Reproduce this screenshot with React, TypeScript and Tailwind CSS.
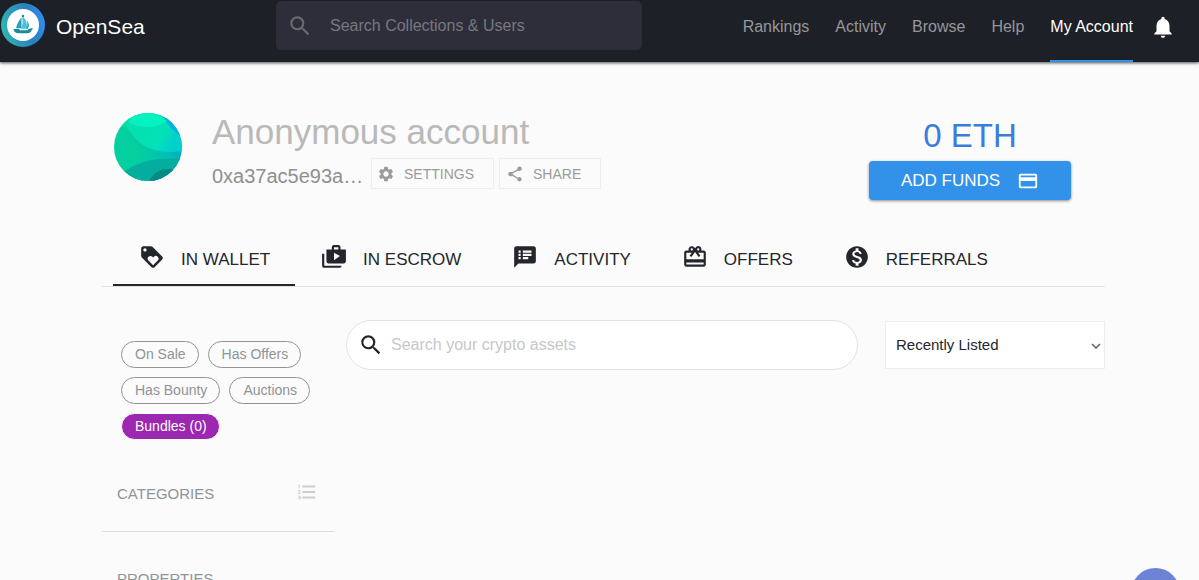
import { useState } from "react";
import {
  MdCardGiftcard,
  MdCreditCard,
  MdFormatListNumbered,
  MdLoyalty,
  MdMonetizationOn,
  MdNotifications,
  MdSearch,
  MdSettings,
  MdShare,
  MdShopTwo,
  MdSpeakerNotes,
} from "react-icons/md";

const navLinks = ["Rankings", "Activity", "Browse", "Help", "My Account"];

const tabs = [
  { label: "IN WALLET", icon: MdLoyalty },
  { label: "IN ESCROW", icon: MdShopTwo },
  { label: "ACTIVITY", icon: MdSpeakerNotes },
  { label: "OFFERS", icon: MdCardGiftcard },
  { label: "REFERRALS", icon: MdMonetizationOn },
];

const filters = ["On Sale", "Has Offers", "Has Bounty", "Auctions"];

function Logo() {
  return (
    <svg viewBox="0 0 44 44" className="h-11 w-11 shrink-0" aria-hidden="true">
      <defs>
        <linearGradient id="ring" x1="0" y1="0.6" x2="1" y2="0.4">
          <stop offset="0" stopColor="#2fb5b0" />
          <stop offset="0.65" stopColor="#2b7fc0" />
          <stop offset="1" stopColor="#338df0" />
        </linearGradient>
      </defs>
      <circle cx="22" cy="22" r="22" fill="url(#ring)" />
      <circle cx="22" cy="22" r="16" fill="#fff" />
      {/* sails */}
      <path d="M20.500 14.500c-2.500 2.500-4.500 6.500-5.500 10.700h5.500z" fill="#2a9fb8" />
      <path d="M21 13.500c3.500 1.500 5.500 6 5 12.200h-6.500c2.500-3.500 2.500-8 1.500-12.200z" fill="#4cc3da" />
      <path d="M26 17.500c2 2 2.500 5 1 8.200h-1.500c.9-3 1.200-5.500.5-8.200z" fill="#2a9fb8" />
      <circle cx="22" cy="13" r="1.200" fill="#1c7f98" />
      {/* hull */}
      <path d="M12.500 26h5.500l1 1.300h7.500l1-1.300 4-1c.5 0 .5 1-.5 1.500-.8 2.500-2.300 3.800-4.500 3.800H17.500c-3 0-4.500-1.500-5-4.300z" fill="#1d8a9c" />
    </svg>
  );
}

function Avatar() {
  return (
    <svg viewBox="0 0 68 68" className="mt-px h-[68px] w-[68px] shrink-0" role="img" aria-label="Account avatar">
      <defs>
        <clipPath id="face">
          <circle cx="34" cy="34" r="34" />
        </clipPath>
        <linearGradient id="sea" x1="0.35" y1="0.6" x2="1" y2="0.3">
          <stop offset="0" stopColor="#04cf9f" />
          <stop offset="0.6" stopColor="#04bdb4" />
          <stop offset="1" stopColor="#0399d4" />
        </linearGradient>
        <linearGradient id="band" x1="0" y1="0" x2="1" y2="0.35">
          <stop offset="0" stopColor="#05dfa6" />
          <stop offset="0.8" stopColor="#03e1b8" />
          <stop offset="1" stopColor="#02d0cc" />
        </linearGradient>
      </defs>
      <g clipPath="url(#face)">
        <rect width="68" height="68" fill="url(#sea)" />
        <path d="M5 12C15 14 16 20 23 27c10 10 26 14 45 11V0H10z" fill="url(#band)" />
        <path d="M48 4c4 6 12 15 20 20V0z" fill="#04b4dc" />
        <path d="M14 9c11 7 30 7 39-1L40-2H22z" fill="#04f2c0" />
        <path d="M10 59c14-11 34-15 58-13v22H14z" fill="#04ae9e" />
        <path d="M35 68c4-8 12-13 24-12v12z" fill="#048c84" />
      </g>
    </svg>
  );
}

export default function App() {
  const [activeTab, setActiveTab] = useState("IN WALLET");
  const [sort, setSort] = useState("Recently Listed");

  return (
    <div className="h-screen overflow-hidden bg-[#fbfbfb] font-['Liberation_Sans',Arial,sans-serif]">
      {/* Header */}
      <header className="flex h-[62px] items-start bg-[#1d2027] pr-[23px] pl-px shadow-[0_1px_3px_rgba(0,0,0,0.7)]">
        <a href="#home" className="mt-[3px] flex w-[275px] shrink-0 items-center gap-[11px] text-[21px] text-white">
          <Logo />
          <span className="pt-1">OpenSea</span>
        </a>
        <label className="mt-px flex h-[49px] w-[366px] items-center gap-[17px] rounded-[5px] bg-[#2d2e3a] pl-[11px]">
          <MdSearch className="h-[26px] w-[26px] shrink-0 text-[#686971]" />
          <input
            type="text"
            aria-label="Search collections and users"
            placeholder="Search Collections & Users"
            className="w-full bg-transparent text-base text-white outline-none placeholder:text-[#777880]"
          />
        </label>
        <nav className="ml-auto flex gap-[26px]">
          {navLinks.map((link) => (
            <a
              key={link}
              href="#nav"
              className={
                link === "My Account"
                  ? "flex h-[62px] items-center border-b-2 border-[#3291e9] pb-[6px] text-white"
                  : "flex h-[62px] items-center border-b-2 border-transparent pb-[6px] text-[#96979a] hover:text-white"
              }
            >
              {link}
            </a>
          ))}
        </nav>
        <button aria-label="Notifications" className="mt-[14px] ml-[17px] text-white">
          <MdNotifications className="h-[26px] w-[26px]" />
        </button>
      </header>

      <main className="pr-[94px] pl-[102px]">
        {/* Profile */}
        <section className="flex items-start justify-between pt-[50px] pr-[34px] pl-3">
          <div className="flex gap-[30px]">
            <Avatar />
            <div>
              <h1 className="text-[35px] leading-10 text-[#b9b9b9]">Anonymous account</h1>
              <div className="mt-[6px] flex items-center text-sm text-[#9b9b9b]">
                <span className="mt-[5px] w-[159px] text-xl leading-6 text-[#8f8f8f]">0xa37ac5e93a…</span>
                <button className="flex h-[31px] items-center gap-[9px] border border-[#eeeeee] pr-[19px] pl-[5px]">
                  <MdSettings className="h-[18px] w-[18px]" />
                  SETTINGS
                </button>
                <button className="ml-[5px] flex h-[31px] items-center gap-[9px] border border-[#eeeeee] pr-[19px] pl-[6px]">
                  <MdShare className="h-[18px] w-[18px]" />
                  SHARE
                </button>
              </div>
            </div>
          </div>
          <div className="w-[202px] pt-1 text-center">
            <p className="text-[33px] leading-10 text-[#3a7ddc]">0 ETH</p>
            <button className="mt-[5px] flex h-[39px] w-full items-center justify-center gap-[17px] rounded bg-[#3291e9] text-[17px] text-white shadow-[0_1px_3px_rgba(0,0,0,0.45)]">
              ADD FUNDS
              <MdCreditCard className="h-[22px] w-[22px]" />
            </button>
          </div>
        </section>

        {/* Tabs */}
        <div role="tablist" className="mt-7 flex border-b border-[#e2e2e2] pl-[11px]">
          {tabs.map(({ label, icon: Icon }) => (
            <button
              key={label}
              role="tab"
              aria-selected={activeTab === label}
              onClick={() => setActiveTab(label)}
              className={
                activeTab === label
                  ? "flex h-[58px] items-center gap-4 border-b-2 border-[#23262d] pr-[25px] pl-[26px] text-[17px] text-[#23262d]"
                  : "flex h-[58px] items-center gap-4 border-b-2 border-transparent pr-[25px] pl-[26px] text-[17px] text-[#23262d]"
              }
            >
              <Icon className="mt-[2px] h-[26px] w-[26px]" />
              <span className="pt-[7px]">{label}</span>
            </button>
          ))}
        </div>

        <div className="flex items-start">
          {/* Filters */}
          <aside className="w-[232px] shrink-0 text-[#8f9496]">
            <div className="flex flex-wrap gap-[9px] pt-[54px] pl-[19px] text-sm">
              {filters.map((filter) => (
                <button key={filter} className="h-[27px] rounded-full border border-[#8f9496] pr-3 pb-[2px] pl-[13px]">
                  {filter}
                </button>
              ))}
              <button className="h-[27px] rounded-full border border-[#fbfbfb] bg-[#9c27b0] pr-3 pb-[2px] pl-[13px] text-white">
                Bundles (0)
              </button>
            </div>
            <div className="mt-[41px] flex h-[51px] items-start justify-between border-b border-[#dddddd] pr-4 pl-[15px]">
              <h2 className="mt-[3px] text-[15px] leading-5">CATEGORIES</h2>
              <MdFormatListNumbered className="h-[22px] w-[22px] text-[#cdcdcd]" />
            </div>
            <h2 className="mt-[37px] pl-[15px] text-[15px] leading-5">PROPERTIES</h2>
          </aside>

          {/* Search and sort */}
          <div className="ml-3 flex flex-1 items-center pt-[33px]">
            <label className="flex h-[50px] flex-1 items-center gap-[7px] rounded-full border border-[#e2e2e2] bg-white pl-[11px]">
              <MdSearch className="h-[26px] w-[26px] shrink-0 text-[#23262d]" />
              <input
                type="text"
                aria-label="Search your crypto assets"
                placeholder="Search your crypto assets"
                className="mr-6 w-full bg-transparent text-base outline-none placeholder:text-[#c5c8c9]"
              />
            </label>
            <div className="relative ml-[27px]">
              <select
                aria-label="Sort assets"
                value={sort}
                onChange={(e) => setSort(e.target.value)}
                className="h-12 w-[220px] appearance-none border border-[#eeeeee] bg-white pl-[10px] text-[15px] text-[#23262d]"
              >
                <option>Recently Listed</option>
                <option>Recently Created</option>
                <option>Lowest Price</option>
                <option>Highest Price</option>
              </select>
              <svg
                viewBox="0 0 10 6"
                className="pointer-events-none absolute top-[22px] right-1 h-[6px] w-[10px]"
                aria-hidden="true"
              >
                <path d="M1 1l4 4 4-4" fill="none" stroke="#6b6b6b" strokeWidth="1.600" />
              </svg>
            </div>
          </div>
        </div>
      </main>

      {/* Chat launcher */}
      <button
        aria-label="Open chat"
        className="fixed right-[19px] bottom-[-37px] h-[49px] w-[49px] rounded-full bg-[#6d84d6]"
      />
    </div>
  );
}
